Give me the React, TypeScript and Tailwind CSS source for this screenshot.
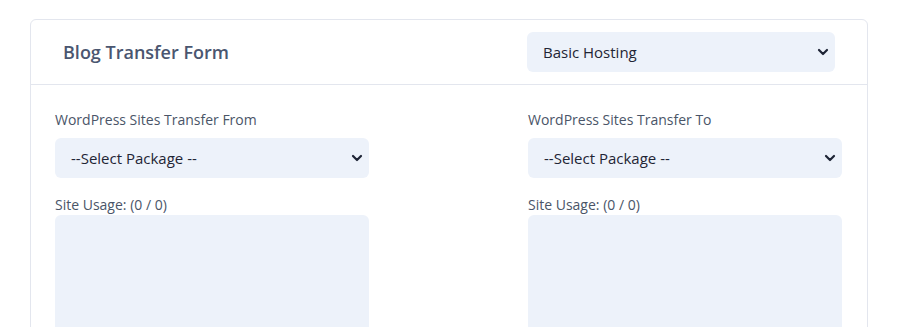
import React from "react";

function Chevron() {
  return (
    <svg
      className="pointer-events-none absolute right-[6px] top-1/2 -translate-y-1/2"
      width="12"
      height="8"
      viewBox="0 0 12 8"
      fill="none"
    >
      <path d="M2 2l4 4 4-4" stroke="#1e2435" strokeWidth="2.2" strokeLinecap="round" strokeLinejoin="round" />
    </svg>
  );
}

function PackageSelect({ label, value }: { label?: string; value: string }) {
  return (
    <div className="relative w-full">
      <select
        aria-label={label}
        defaultValue={value}
        className="h-10 w-full appearance-none rounded-md bg-[#edf2fa] pl-4 pr-8 text-[15px] text-[#1f2535] outline-none"
      >
        <option>{value}</option>
      </select>
      <Chevron />
    </div>
  );
}

function TransferColumn({ title }: { title: string }) {
  return (
    <div className="flex w-[314px] flex-col">
      <label className="text-[14px] leading-5 text-[#4a5568]">{title}</label>
      <div className="mt-2">
        <PackageSelect label={title} value="--Select Package --" />
      </div>
      <div className="mt-[17px] text-[14px] leading-5 text-[#4a5568]">Site Usage: (0 / 0)</div>
      <div className="h-[160px] w-full rounded-md bg-[#edf2fa]" />
    </div>
  );
}

export default function App() {
  return (
    <div
      className="min-h-[327px] bg-white pl-[30px] pr-[30px] pt-[19px]"
      style={{ fontFamily: '"Open Sans", "Noto Sans", sans-serif' }}
    >
      <div className="rounded-md border border-[#e3e6ee] bg-white">
        <div className="flex h-[65px] items-center justify-between border-b border-[#e3e6ee] pl-8 pr-8">
          <h2 className="text-[18px] font-semibold text-[#4a5670]">Blog Transfer Form</h2>
          <div className="w-[308px]">
            <PackageSelect label="Hosting" value="Basic Hosting" />
          </div>
        </div>
        <div className="flex justify-between pl-6 pr-[25px] pt-[25px] pb-6">
          <TransferColumn title="WordPress Sites Transfer From" />
          <TransferColumn title="WordPress Sites Transfer To" />
        </div>
      </div>
    </div>
  );
}
